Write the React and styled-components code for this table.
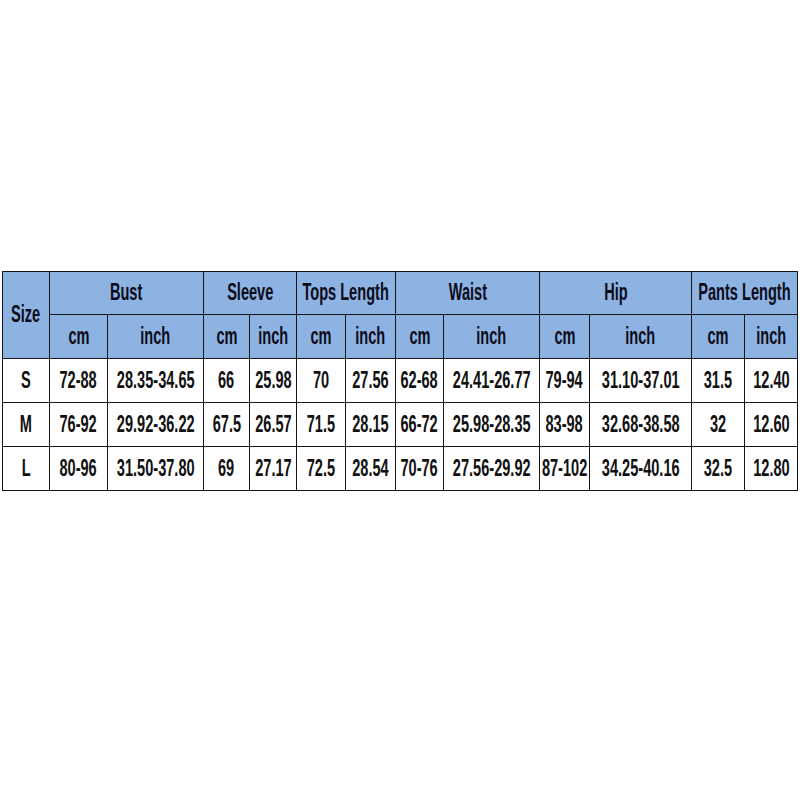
import styled, { createGlobalStyle } from 'styled-components';

//____________GLOBAL____________
const Global = createGlobalStyle`
    html, body {
        margin: 0;
        padding: 0;
        background: #ffffff;
    }
`;
//____________GLOBAL____________

//____________DATA____________
const groups = [
    { name: 'Bust', cols: [58, 96] },
    { name: 'Sleeve', cols: [46, 47] },
    { name: 'Tops Length', cols: [49, 50] },
    { name: 'Waist', cols: [48, 96] },
    { name: 'Hip', cols: [50, 102] },
    { name: 'Pants Length', cols: [53, 53] },
];

const rows = [
    ['S', '72-88', '28.35-34.65', '66', '25.98', '70', '27.56', '62-68', '24.41-26.77', '79-94', '31.10-37.01', '31.5', '12.40'],
    ['M', '76-92', '29.92-36.22', '67.5', '26.57', '71.5', '28.15', '66-72', '25.98-28.35', '83-98', '32.68-38.58', '32', '12.60'],
    ['L', '80-96', '31.50-37.80', '69', '27.17', '72.5', '28.54', '70-76', '27.56-29.92', '87-102', '34.25-40.16', '32.5', '12.80'],
];
//____________DATA____________

//____________LAYOUT____________
const Page = styled.div`
    width: 800px;
    height: 800px;
    padding: 271px 0 0 2px;
    box-sizing: border-box;
`;

const Table = styled.table`
    border-collapse: collapse;
    table-layout: fixed;
    width: 795px;
    font-family: "Liberation Sans", Arial, sans-serif;
    font-weight: bold;
    font-size: 23.5px;
    line-height: 1;
`;

const HeadCell = styled.th`
    background: #8db3e2;
    color: #0b0b1a;
    border: 1px solid #151515;
    height: ${p => p.$h}px;
    padding: 0;
    text-align: center;
    vertical-align: middle;
    white-space: nowrap;
    overflow: visible;
`;

const BodyCell = styled.td`
    background: #ffffff;
    color: #111111;
    border: 1px solid #151515;
    height: 43px;
    padding: 0;
    text-align: center;
    vertical-align: middle;
    white-space: nowrap;
    overflow: visible;
`;

const Narrow = styled.span`
    display: inline-block;
    transform: scaleX(0.62);
    transform-origin: center;
    margin: 0 -50px;
`;
//____________LAYOUT____________

export default function App() {
    const widths = [47, ...groups.flatMap(g => g.cols)];
    return (
        <Page>
            <Global />
            <Table>
                <colgroup>
                    {widths.map((w, i) => <col key={i} style={{ width: w }} />)}
                </colgroup>
                <thead>
                    <tr>
                        <HeadCell rowSpan={2} $h={42}><Narrow>Size</Narrow></HeadCell>
                        {groups.map(g => (
                            <HeadCell key={g.name} colSpan={2} $h={42}><Narrow>{g.name}</Narrow></HeadCell>
                        ))}
                    </tr>
                    <tr>
                        {groups.flatMap(g => [
                            <HeadCell key={g.name + 'cm'} $h={43}><Narrow>cm</Narrow></HeadCell>,
                            <HeadCell key={g.name + 'in'} $h={43}><Narrow>inch</Narrow></HeadCell>,
                        ])}
                    </tr>
                </thead>
                <tbody>
                    {rows.map(r => (
                        <tr key={r[0]}>
                            {r.map((v, i) => <BodyCell key={i}><Narrow>{v}</Narrow></BodyCell>)}
                        </tr>
                    ))}
                </tbody>
            </Table>
        </Page>
    );
}
